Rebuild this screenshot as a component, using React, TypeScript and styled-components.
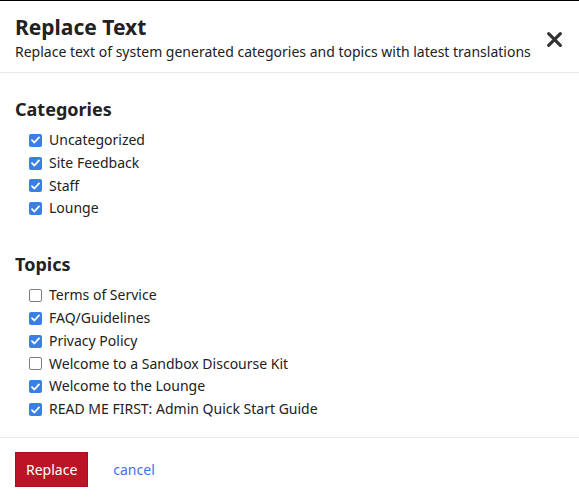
import React, { useState } from "react";
import styled, { createGlobalStyle } from "styled-components";

const GlobalStyle = createGlobalStyle`
  html, body {
    margin: 0;
    padding: 0;
    background: #fff;
  }
  body {
    font-family: "Noto Sans", "Open Sans", sans-serif;
    color: #222;
  }
`;

const Modal = styled.div`
  width: 579px;
  height: 500px;
  box-sizing: border-box;
  border-top: 1px solid #000;
  display: flex;
  flex-direction: column;
  background: #fff;
`;

const Header = styled.div`
  display: flex;
  justify-content: space-between;
  align-items: center;
  padding: 12px 15px 9px 15px;
  border-bottom: 1px solid #e9e9e9;
`;

const Title = styled.h3`
  margin: 0;
  font-size: 21px;
  line-height: 28px;
  font-weight: 700;
  color: #222;
`;

const Subtitle = styled.p`
  margin: 0;
  font-size: 14px;
  line-height: 22px;
  white-space: nowrap;
  color: #222;
`;

const CloseButton = styled.button`
  border: none;
  background: none;
  padding: 0;
  margin-top: 2px;
  width: 20px;
  height: 20px;
  display: flex;
  align-items: center;
  justify-content: center;
  cursor: pointer;
`;

const Body = styled.div`
  flex: 1;
  padding: 22px 15px 0 15px;
  display: flex;
  flex-direction: column;
  gap: 30px;
`;

const Section = styled.div`
  display: flex;
  flex-direction: column;
`;

const SectionTitle = styled.h4`
  margin: 0 0 6px 0;
  font-size: 18px;
  line-height: 28px;
  font-weight: 700;
  color: #222;
`;

const ItemList = styled.div`
  display: flex;
  flex-direction: column;
  padding-left: 14px;
`;

const Item = styled.label`
  display: flex;
  align-items: center;
  gap: 7px;
  font-size: 14px;
  line-height: 22.8px;
  color: #222;
  cursor: pointer;
`;

const Box = styled.span<{ $checked: boolean }>`
  width: 13px;
  height: 13px;
  box-sizing: border-box;
  border-radius: 2px;
  flex-shrink: 0;
  display: flex;
  align-items: center;
  justify-content: center;
  background: ${(p) => (p.$checked ? "#3a7fe3" : "#fff")};
  border: ${(p) => (p.$checked ? "none" : "1.5px solid #7d7d86")};
`;

const Footer = styled.div`
  display: flex;
  align-items: center;
  gap: 25px;
  padding: 14px 15px 13px 15px;
  border-top: 1px solid #e9e9e9;
`;

const PrimaryButton = styled.button`
  background: #bc1426;
  border: 1px solid #a50f1f;
  color: #fff;
  font-family: inherit;
  font-size: 14px;
  height: 35px;
  padding: 0 10px;
  cursor: pointer;
`;

const CancelLink = styled.a`
  color: #3d73f0;
  font-size: 14px;
  text-decoration: none;
  cursor: pointer;
`;

const Check = () => (
  <svg width="9" height="8" viewBox="0 0 9 8">
    <path d="M1 4.2 L3.4 6.5 L8 1.4" fill="none" stroke="#fff" strokeWidth="1.8" strokeLinecap="round" strokeLinejoin="round" />
  </svg>
);

const CloseIcon = () => (
  <svg width="17" height="17" viewBox="0 0 16 16">
    <path d="M2.5 2.5 L13.5 13.5 M13.5 2.5 L2.5 13.5" stroke="#333" strokeWidth="3" strokeLinecap="round" />
  </svg>
);

type Entry = { label: string; checked: boolean };

const categories: Entry[] = [
  { label: "Uncategorized", checked: true },
  { label: "Site Feedback", checked: true },
  { label: "Staff", checked: true },
  { label: "Lounge", checked: true },
];

const topics: Entry[] = [
  { label: "Terms of Service", checked: false },
  { label: "FAQ/Guidelines", checked: true },
  { label: "Privacy Policy", checked: true },
  { label: "Welcome to a Sandbox Discourse Kit", checked: false },
  { label: "Welcome to the Lounge", checked: true },
  { label: "READ ME FIRST: Admin Quick Start Guide", checked: true },
];

const CheckList = ({ items }: { items: Entry[] }) => {
  const [state, setState] = useState(items.map((i) => i.checked));
  return (
    <ItemList>
      {items.map((item, idx) => (
        <Item
          key={item.label}
          onClick={() => setState((s) => s.map((v, i) => (i === idx ? !v : v)))}
        >
          <Box $checked={state[idx]}>{state[idx] && <Check />}</Box>
          {item.label}
        </Item>
      ))}
    </ItemList>
  );
};

export default function App() {
  return (
    <>
      <GlobalStyle />
      <Modal>
        <Header>
          <div>
            <Title>Replace Text</Title>
            <Subtitle>Replace text of system generated categories and topics with latest translations</Subtitle>
          </div>
          <CloseButton aria-label="close">
            <CloseIcon />
          </CloseButton>
        </Header>
        <Body>
          <Section>
            <SectionTitle>Categories</SectionTitle>
            <CheckList items={categories} />
          </Section>
          <Section>
            <SectionTitle>Topics</SectionTitle>
            <CheckList items={topics} />
          </Section>
        </Body>
        <Footer>
          <PrimaryButton>Replace</PrimaryButton>
          <CancelLink>cancel</CancelLink>
        </Footer>
      </Modal>
    </>
  );
}
